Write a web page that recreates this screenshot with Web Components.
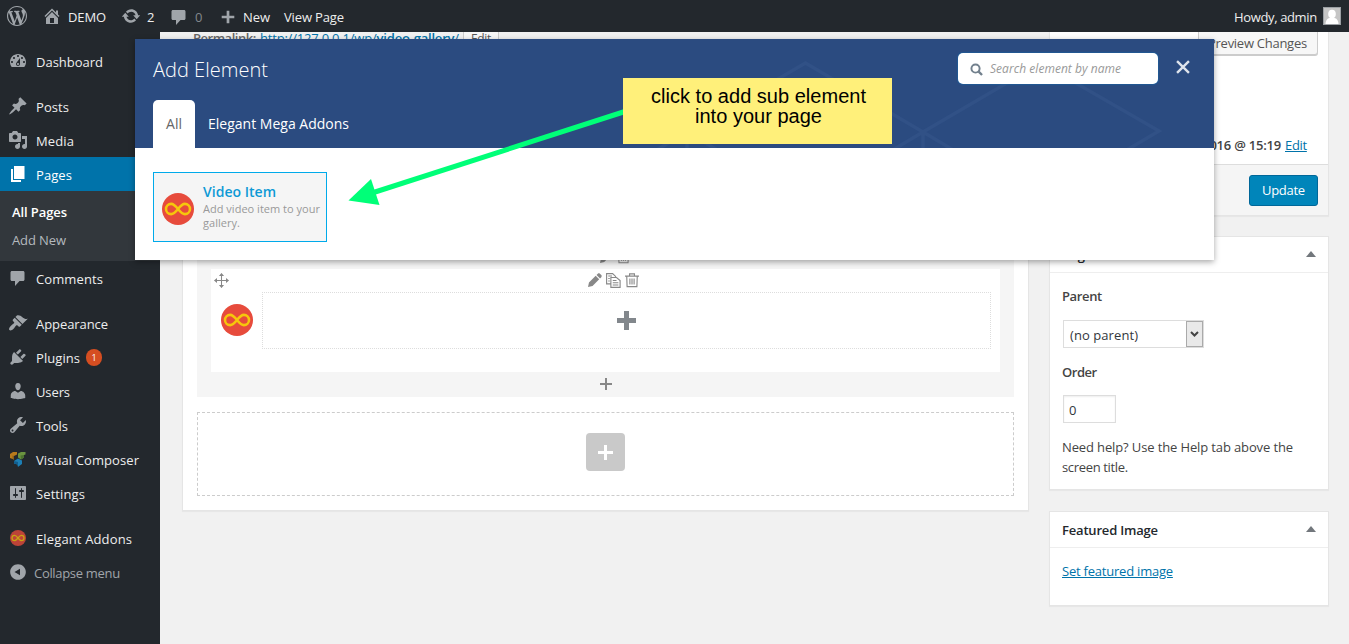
<!DOCTYPE html>
<html lang="en">
<head>
<meta charset="utf-8">
<title>Edit Page</title>
<style>
html,body{margin:0;height:100%;overflow:hidden;background:#f1f1f1}
body{font:13px/20px "Open Sans","Noto Sans",sans-serif;color:#444}
</style>
</head>
<body>
<wp-screen></wp-screen>
<script>
const define=(name,html,setup)=>customElements.define(name,class extends HTMLElement{
  connectedCallback(){
    if(this.shadowRoot)return;
    const root=this.attachShadow({mode:'open'});
    root.innerHTML=typeof html==='function'?html(this):html;
    if(setup)setup(this,root);
  }
});

/* Icon set, 20x20 grid */
const P=(d,extra='')=>`<path fill-rule="evenodd" d="${d}" ${extra}/>`;
const ICONS={
wordpress:P('M20 10C20 4.49 15.51 0 10 0C4.48 0 0 4.49 0 10C0 15.52 4.48 20 10 20C15.51 20 20 15.52 20 10ZM7.78 15.37L4.37 6.22C4.92 6.2 5.54 6.14 5.54 6.14C6.04 6.08 5.98 5.01 5.48 5.03C5.48 5.03 4.03 5.14 3.11 5.14C2.93 5.14 2.74 5.14 2.53 5.13C4.12 2.69 6.87 1.11 10 1.11C12.33 1.11 14.45 1.98 16.05 3.45C15.37 3.34 14.4 3.84 14.4 5.03C14.4 5.77 14.85 6.39 15.3 7.13C15.65 7.74 15.85 8.49 15.85 9.59C15.85 11.08 14.45 14.59 14.45 14.59L11.42 6.22C11.96 6.2 12.24 6.05 12.24 6.05C12.74 6 12.68 4.8 12.18 4.83C12.18 4.83 10.74 4.95 9.8 4.95C8.93 4.95 7.47 4.83 7.47 4.83C6.97 4.8 6.91 6.03 7.41 6.05L8.33 6.13L9.59 9.54ZM17.41 10C17.65 9.36 18.15 8.13 17.84 5.75C18.54 7.04 18.89 8.46 18.89 10C18.89 13.29 17.16 16.24 14.49 17.78C15.46 15.19 16.43 12.58 17.41 10ZM6.1 18.09C3.12 16.65 1.11 13.53 1.11 10C1.11 8.72 1.34 7.56 1.83 6.47C3.25 10.36 4.67 14.26 6.1 18.09ZM10.13 11.46L12.71 18.44C11.85 18.73 10.95 18.89 10 18.89C9.21 18.89 8.43 18.78 7.71 18.56C8.52 16.18 9.33 13.82 10.13 11.46Z'),
home:P('M16 8.5l1.53 1.53-1.06 1.06L10 4.6l-6.47 6.49-1.06-1.06L10 2.5l4 4v-2h2v4zm-6-2.46l6 5.99V18H4v-5.97zM12 17v-5H8v5h4z'),
update:P('M10.2 3.28c3.53 0 6.43 2.61 6.92 6h2.08l-3.5 4-3.5-4h2.32c-.45-1.97-2.21-3.45-4.32-3.45-1.45 0-2.73.71-3.54 1.78L4.95 5.66C6.23 4.2 8.11 3.28 10.2 3.28zm-.4 13.44c-3.52 0-6.43-2.61-6.92-6H.8l3.5-4c1.17 1.33 2.33 2.67 3.5 4H5.48c.45 1.97 2.21 3.45 4.32 3.45 1.45 0 2.73-.71 3.54-1.78l1.71 1.95c-1.28 1.46-3.15 2.38-5.25 2.38z'),
comments:P('M4 3h11c.9 0 1.5.6 1.5 1.5v7c0 .9-.6 1.5-1.5 1.5h-3.5l-4.500 5v-5H4c-.9 0-1.500-.6-1.500-1.500v-7C2.500 3.600 3.100 3 4 3z'),
plus:P('M17 8.500v3h-5.500v5.500h-3v-5.500H3v-3h5.500V3h3v5.500z'),
dashboard:P('M3.76 16h12.48c1.1-1.37 1.76-3.11 1.76-5 0-4.42-3.58-8-8-8s-8 3.58-8 8c0 1.89.66 3.63 1.76 5zM10 4c.55 0 1 .45 1 1s-.45 1-1 1-1-.45-1-1 .45-1 1-1zM6 6c.55 0 1 .45 1 1s-.45 1-1 1-1-.45-1-1 .45-1 1-1zm8 0c.55 0 1 .45 1 1s-.45 1-1 1-1-.45-1-1 .45-1 1-1zm-5.37 5.55L12 7v6c0 1.1-.9 2-2 2s-2-.9-2-2c0-.57.24-1.08.63-1.45zM4 10c.55 0 1 .45 1 1s-.45 1-1 1-1-.45-1-1 .45-1 1-1zm12 0c.55 0 1 .45 1 1s-.45 1-1 1-1-.45-1-1 .45-1 1-1zm-5 3c0-.55-.45-1-1-1s-1 .45-1 1 .45 1 1 1 1-.45 1-1z'),
posts:P('M10.44 3.02l1.82-1.82 6.36 6.35-1.83 1.82c-1.05-.68-2.48-.57-3.41.36l-.75.75c-.92.93-1.04 2.35-.35 3.41l-1.83 1.82-2.41-2.41-2.8 2.79c-.42.42-3.38 2.71-3.8 2.29s1.86-3.39 2.28-3.81l2.79-2.79L4.1 9.36l1.83-1.82c1.05.69 2.48.57 3.4-.36l.75-.75c.93-.92 1.05-2.35.36-3.41z'),
media:P('M13 11V4c0-.55-.45-1-1-1h-1.67L9 1H5L3.67 3H2c-.55 0-1 .45-1 1v7c0 .55.45 1 1 1h10c.55 0 1-.45 1-1zM7 4.5c1.38 0 2.5 1.12 2.5 2.5S8.38 9.5 7 9.5 4.5 8.38 4.5 7 5.62 4.5 7 4.5zM14 6h5v10.5c0 1.38-1.12 2.5-2.5 2.5S14 17.88 14 16.5s1.12-2.5 2.5-2.5c.17 0 .34.02.5.05V9h-3V6zm-4 8.05V13h2v3.5c0 1.38-1.12 2.5-2.5 2.5S7 17.88 7 16.5 8.12 14 9.5 14c.17 0 .34.02.5.05z'),
pages:P('M6 15V2h10.500v13H6zm-1 1h8v2H3V5h2v11z'),
appearance:P('M14.48 11.06L7.41 3.99l1.5-1.5c.5-.56 2.3-.47 3.51.32 1.21.8 1.43 1.28 2.91 2.1 1.18.64 2.45 1.26 4.45.85zm-.71.71L6.7 4.7 4.93 6.47c-.39.39-.39 1.02 0 1.41l1.06 1.06c.39.39.39 1.03 0 1.42-.6.6-1.43 1.11-2.21 1.69-.35.26-.7.53-1.01.84C1.43 14.23.4 16.08 1.4 17.07c.99 1 2.84-.03 4.18-1.36.31-.31.58-.66.85-1.02.57-.78 1.08-1.61 1.69-2.21.39-.39 1.02-.39 1.41 0l1.06 1.06c.39.39 1.02.39 1.41 0z'),
plugins:P('M13.11 4.36L9.87 7.6 8 5.73l3.24-3.24c.35-.34 1.05-.2 1.56.32.52.51.66 1.21.31 1.55zm-8 1.77l.91-1.12 9.01 9.01-1.19.84c-.71.71-2.63 1.16-3.82 1.16H6.14L4.9 17.26c-.59.59-1.54.59-2.12 0-.59-.58-.59-1.53 0-2.12l1.24-1.24v-3.88c0-1.13.4-3.19 1.09-3.89zm7.26 3.97l3.24-3.24c.34-.35 1.04-.21 1.55.31.52.51.66 1.21.31 1.55l-3.24 3.25z'),
users:P('M10 9.25c-2.27 0-2.73-3.44-2.73-3.44C7 4.02 7.82 2 9.97 2c2.16 0 2.98 2.02 2.71 3.81 0 0-.41 3.44-2.68 3.44zm0 2.57L12.72 10c2.39 0 4.52 2.33 4.52 4.53v2.49s-3.65 1.13-7.24 1.13c-3.65 0-7.24-1.13-7.24-1.13v-2.49c0-2.25 1.94-4.48 4.47-4.48z'),
tools:P('M16.68 9.77c-1.34 1.34-3.3 1.67-4.95.99l-5.41 6.52c-.99.99-2.59.99-3.58 0s-.99-2.59 0-3.57l6.52-5.42c-.68-1.65-.35-3.61.99-4.95 1.28-1.28 3.12-1.62 4.72-1.06l-2.89 2.89 2.82 2.82 2.86-2.87c.53 1.58.18 3.39-1.08 4.65zM3.81 16.21c.4.39 1.04.39 1.43 0 .4-.4.4-1.04 0-1.43-.39-.4-1.03-.4-1.43 0-.39.39-.39 1.03 0 1.43z'),
settings:P('M18 16V4c0-.55-.45-1-1-1H3c-.55 0-1 .45-1 1v12c0 .55.45 1 1 1h14c.55 0 1-.45 1-1zM8 11h1c.55 0 1 .45 1 1s-.45 1-1 1H8v1.5c0 .28-.22.5-.5.5s-.5-.22-.5-.5V13H6c-.55 0-1-.45-1-1s.45-1 1-1h1V5.5c0-.28.22-.5.5-.5s.5.22.5.5V11zm5-2h-1c-.55 0-1-.45-1-1s.45-1 1-1h1V5.5c0-.28.22-.5.5-.5s.5.22.5.5V7h1c.55 0 1 .45 1 1s-.45 1-1 1h-1v5.5c0 .28-.22.5-.5.5s-.5-.22-.5-.5V9z'),
collapse:P('M10 2.16c4.33 0 7.84 3.51 7.84 7.84s-3.51 7.84-7.84 7.84S2.16 14.33 2.16 10 5.67 2.16 10 2.16zm2 11.2V6.64L6.500 10z'),
composer:'<path fill="#b87a1c" d="M2 5l3-2h4v2.500L6 7v3.500L2 9z"/><path fill="#8a5f16" d="M4.500 6.500L6 7v3.500l-1.500-.5z"/><path fill="#6b9440" d="M10 4.500L13 3h4.500v2.500L16 6v2.500l-3 2-3-2z"/><path fill="#4c7330" d="M12.500 6.500L16 6v2.500l-3 2z"/><path fill="#1c7fb5" d="M6 12l4-2.500 4 2V15l-3.500 2.500L10 18l-.5-2.500L6 14.500z"/><path fill="#125d8c" d="M6 12l4 1v5l-.5-2.500-3.500-1z"/>',
infinity:'<circle cx="10" cy="10" r="10" fill="#e74b3c"/><path d="M10 10C8.200 7.700 7.200 6.800 5.700 6.800a3.200 3.200 0 0 0 0 6.400C7.200 13.200 8.200 12.300 10 10S12.800 6.800 14.300 6.800a3.200 3.200 0 0 1 0 6.400C12.800 13.200 11.800 12.300 10 10Z" fill="none" stroke="#f6c60c" stroke-width="1.600"/>',
search:'<circle cx="8.500" cy="8.500" r="6.300" fill="none" stroke="currentColor" stroke-width="3"/><path d="M13 13l5.500 5.500" stroke="currentColor" stroke-width="3.600"/>',
close:'<path d="M1.500 1.500l17 17M18.500 1.500l-17 17" stroke="currentColor" stroke-width="3.400"/>',
move:'<path d="M10 1v18M1 10h18" fill="none" stroke="currentColor" stroke-width="1.400"/><path d="M10 0l3.400 4H6.600zM10 20l3.400-4H6.600zM0 10l4-3.400v6.800zM20 10l-4-3.400v6.800z"/>',
pencil:'<path d="M0 20l1.400-6.500L11 4l5 5-9.500 9.600zM12.200 2.800L14 1c.8-.8 2.200-.8 3 0l2 2c.8.800.8 2.200 0 3l-1.800 1.800z"/>',
copy:'<g fill="none" stroke="currentColor" stroke-width="1.500"><path d="M6 14.500H.8V.8h8l4 3.700v2M6.500 6h7.500l4.800 4v9.200H6.500zM3 4h5M3 7.300h2M3 10.700h2M9 10h5M9 13h7.500M9 16h7.500"/></g>',
trash:'<g fill="none" stroke="currentColor" stroke-width="1.600"><path d="M0 4.500h20M6.500 4V1.200h7V4M2.500 5l.5 14.500h14l.5-14.500M7 8v8.500M10 8v8.500M13 8v8.500"/></g>'
};
define('ui-icon',el=>`<style>:host{display:block;flex:none;line-height:0;width:${el.getAttribute('size')||20}px;height:${el.getAttribute('size')||20}px}svg{display:block;width:100%;height:100%;fill:currentColor;overflow:visible}</style><svg viewBox="0 0 20 20">${ICONS[el.getAttribute('name')]}</svg>`);

/* Single-line label tracked to a given measure */
define('ui-label',`<style>:host{display:block;flex:none;white-space:nowrap}span{display:inline-block}</style><span><slot></slot></span>`,(el,root)=>{
  const w=+el.getAttribute('w'),span=root.querySelector('span');
  if(!w)return;
  el.style.width=w+'px';
  const n=el.textContent.length;
  if(n>1)span.style.letterSpacing=((w-span.getBoundingClientRect().width)/(n-.5))+'px';
});

define('admin-bar',`<style>
:host{display:flex;align-items:center;height:32px;background:#23282d;color:#eee;padding:0 8px 0 7px;box-sizing:border-box;line-height:20px}
ui-icon{color:#a0a5aa}.dim{color:#82878c}
ui-label{margin-top:2px;height:21px}
.who{margin-left:auto;margin-right:6px}
.avatar{width:18px;height:18px;background:#c5c5c5;box-sizing:border-box;border:1px solid #9b9fa3;overflow:hidden}
.avatar svg{display:block}
</style>
<ui-icon name="wordpress"></ui-icon>
<ui-icon name="home" style="margin-left:15px"></ui-icon><ui-label w="38" style="margin-left:6px">DEMO</ui-label>
<ui-icon name="update" style="margin-left:15px"></ui-icon><ui-label w="7" style="margin-left:6px">2</ui-label>
<ui-icon name="comments" style="margin:2px 0 0 15px"></ui-icon><ui-label class="dim" w="7" style="margin-left:6px">0</ui-label>
<ui-icon name="plus" size="18" style="margin:1px 0 0 17px"></ui-icon><ui-label w="27" style="margin-left:6px">New</ui-label>
<ui-label w="60" style="margin-left:14px">View Page</ui-label>
<ui-label class="who" w="83">Howdy, admin</ui-label>
<span class="avatar"><svg width="16" height="16" viewBox="0 0 16 16" fill="#fff"><ellipse cx="8" cy="6" rx="3.800" ry="4.300"/><path d="M1.500 16c.3-4 2-5.500 4-6h5c2 .5 3.700 2 4 6z"/></svg></span>`);

define('menu-item',el=>`<style>
:host{display:flex;height:34px;align-items:center;padding-left:8px;color:#eee}
:host([current]){background:#0073aa;color:#fff}
:host([current]) ui-icon{color:#fff}
:host([gap]){margin-top:11px}
:host([muted]){color:#a0a5aa}
ui-icon{color:#a0a5aa;margin-right:8px;margin-top:-1px}
:host([muted]) ui-icon{margin-right:6px}
ui-icon[name=infinity]{opacity:.78;margin:0 10px 0 2px}
ui-label{margin-top:2px}
.badge{margin-left:6px;width:16px;height:17px;border-radius:9px;background:#d54e21;color:#fff;font-size:9px;line-height:17px;text-align:center}
</style><ui-icon name="${el.getAttribute('icon')}" ${el.getAttribute('icon')==='infinity'?'size="16"':''}></ui-icon><ui-label w="${el.getAttribute('w')}">${el.getAttribute('label')}</ui-label>${el.hasAttribute('badge')?`<span class="badge">${el.getAttribute('badge')}</span>`:''}`);

define('admin-menu',`<style>
:host{display:block;width:160px;background:#23282d;padding-top:12px;box-sizing:border-box;flex:none}
.sub{background:#32373c;height:70px;box-sizing:border-box;padding:7px 0 0 12px;color:#b4b9be}
.sub ui-label{height:28px;line-height:29px}
.sub .on{color:#fff;font-weight:600}
</style>
<menu-item icon="dashboard" w="67" label="Dashboard"></menu-item>
<menu-item gap icon="posts" w="33" label="Posts"></menu-item>
<menu-item icon="media" w="38" label="Media"></menu-item>
<menu-item current icon="pages" w="36" label="Pages"></menu-item>
<div class="sub"><ui-label class="on" w="55">All Pages</ui-label><ui-label w="54">Add New</ui-label></div>
<menu-item icon="comments" w="67" label="Comments"></menu-item>
<menu-item gap icon="appearance" w="72" label="Appearance"></menu-item>
<menu-item icon="plugins" w="44" label="Plugins" badge="1"></menu-item>
<menu-item icon="users" w="34" label="Users"></menu-item>
<menu-item icon="tools" w="32" label="Tools"></menu-item>
<menu-item icon="composer" w="103" label="Visual Composer"></menu-item>
<menu-item icon="settings" w="49" label="Settings"></menu-item>
<menu-item gap icon="infinity" w="96" label="Elegant Addons"></menu-item>
<menu-item muted icon="collapse" w="86" label="Collapse menu"></menu-item>`);

define('page-editor',`<style>
:host{display:flex;flex-direction:column;width:847px;flex:none}
.perma{display:flex;height:24px;padding-left:11px;line-height:20px;margin-top:-4px;color:#666}
.perma b{font-weight:600}.perma a{color:#0073aa;text-decoration:underline}
.perma ui-label+ui-label{margin-left:4px}
.btn{margin-left:4px;width:36px;height:24px;box-sizing:border-box;border:1px solid #ccc;background:#f7f7f7;font-size:12px;padding-left:7px;margin-top:-1px;line-height:21px;color:#555}
.box{margin-top:12px;height:447px;box-sizing:border-box;border:1px solid #e5e5e5;background:#fff;padding:14px;display:flex;flex-direction:column;box-shadow:0 1px 1px rgba(0,0,0,.04)}
.row{height:318px;background:#f5f5f5;box-sizing:border-box;padding:164px 14px 0;display:flex;flex-direction:column}
.tools{display:flex;color:#888;justify-content:center}
.tools.top{height:26px;align-items:flex-end;gap:4px;padding:0 0 6px 18px;box-sizing:border-box}
.cell{background:#fff;height:103px;padding:3px 9px 0 3px;box-sizing:border-box;flex:none}
.head{display:grid;grid-template-columns:1fr auto 1fr;height:16px;margin-bottom:4px;align-items:center;color:#888}
.head .mid{display:flex;gap:4px;padding-left:22px}
.body{display:flex;align-items:center;gap:9px;padding-left:7px}
.drop{flex:1;height:57px;box-sizing:border-box;border:1px dotted #ddd;display:flex;align-items:center;justify-content:center;color:#82878c}
.add{height:24px;display:flex;align-items:center;justify-content:center;color:#888}
.empty{margin-top:15px;height:84px;box-sizing:border-box;border:1px dashed #ccc;display:flex;align-items:center;justify-content:center;padding-bottom:4px}
.empty span{width:39px;height:38px;border-radius:4px;background:#c9c9c9;display:grid;place-items:center}
</style>
<div class="perma"><ui-label w="63"><b>Permalink:</b></ui-label><ui-label w="199"><a>http://127.0.0.1/wp/<span style="font-weight:600">video-gallery</span>/</a></ui-label><span class="btn"><ui-label w="20">Edit</ui-label></span></div>
<div class="box">
 <div class="row">
  <div class="tools top"><ui-icon name="pencil" size="13"></ui-icon><ui-icon name="trash" size="13"></ui-icon></div>
  <div class="cell">
   <div class="head"><ui-icon name="move" size="15"></ui-icon><div class="mid"><ui-icon name="pencil" size="14"></ui-icon><ui-icon name="copy" size="15"></ui-icon><ui-icon name="trash" size="14"></ui-icon></div><span></span></div>
   <div class="body"><ui-icon name="infinity" size="32" style="margin-top:-2px"></ui-icon><div class="drop"><svg width="19" height="19"><path d="M9.500 0v19M0 9.500h19" stroke="currentColor" stroke-width="5"/></svg></div></div>
  </div>
  <div class="add"><svg width="12" height="12"><path d="M6 0v12M0 6h12" stroke="currentColor" stroke-width="2"/></svg></div>
 </div>
 <div class="empty"><span><svg width="15" height="15"><path d="M7.500 0v15M0 7.500h15" stroke="#fff" stroke-width="3"/></svg></span></div>
</div>`);

define('meta-box',el=>`<style>
:host{display:block;background:#fff;border:1px solid #e5e5e5;box-sizing:border-box;box-shadow:0 1px 1px rgba(0,0,0,.04);padding:0;color:#444}
header{height:35px;border-bottom:1px solid #eee;display:flex;justify-content:space-between;align-items:center;padding:0 12px;color:#23282d;font-weight:600}
header ui-label{margin-top:1px}
i{border:5px solid transparent;border-top:0;border-bottom:6px solid #72777c;margin:-2px 0 0 0}
.in{padding:0 12px}
</style><header><ui-label w="${el.getAttribute('w')}">${el.getAttribute('heading')}</ui-label><i></i></header><div class="in"><slot></slot></div>`);

define('publish-box',`<style>
:host{display:flex;flex-direction:column;height:190px;margin-top:-6px;background:#fff;border:1px solid #e5e5e5;box-sizing:border-box;box-shadow:0 1px 1px rgba(0,0,0,.04)}
.top{display:flex;justify-content:flex-end;padding-right:10px}
.pre{width:120px;height:28px;box-sizing:border-box;border:1px solid #ccc;border-radius:3px;background:#f7f7f7;box-shadow:0 1px 0 #ccc;color:#555;padding:5px 0 0 9px;line-height:20px}
.date{display:flex;justify-content:flex-end;gap:4px;padding-right:21px;margin-top:80px;height:29px;line-height:20px}
.date b{font-weight:600}a{color:#0073aa;text-decoration:underline}
.foot{border-top:1px solid #ddd;background:#f5f5f5;flex:1;display:flex;justify-content:flex-end;align-items:flex-start;padding:10px 10px 0 0}
.up{width:69px;height:31px;box-sizing:border-box;border:1px solid #006799;border-radius:3px;background:#0085ba;color:#fff;padding:4px 0 0 12px;line-height:20px}
</style>
<div class="top"><span class="pre"><ui-label w="99">Preview Changes</ui-label></span></div>
<div class="date"><b><ui-label w="120">Nov 7, 2016 @ 15:19</ui-label></b><ui-label w="22"><a>Edit</a></ui-label></div>
<div class="foot"><span class="up"><ui-label w="43">Update</ui-label></span></div>`);

define('side-column',`<style>
:host{display:flex;flex-direction:column;width:280px;margin-left:20px;flex:none}
.sel{display:flex;width:141px;height:28px;box-sizing:border-box;border:1px solid #ddd;margin:14px 0 0 1px;padding-left:6px;justify-content:space-between;background:#fff;line-height:29px;color:#32373c}
.arr{width:17px;height:26px;box-sizing:border-box;border:1px solid #aaa;background:#e9e9e9;display:grid;place-items:center}
.num{width:53px;height:28px;box-sizing:border-box;border:1px solid #ddd;margin:13px 0 0 1px;padding-left:5px;line-height:29px;color:#32373c;box-shadow:inset 0 1px 2px rgba(0,0,0,.07)}
.str{font-weight:600}a{color:#0073aa;text-decoration:underline}
</style>
<publish-box></publish-box>
<meta-box heading="Page Attributes" w="98" style="height:254px;margin-top:20px">
 <ui-label class="str" w="40" style="margin-top:13px">Parent</ui-label>
 <div class="sel"><ui-label w="68">(no parent)</ui-label><span class="arr"><svg width="9" height="6"><path d="M1 1l3.500 3.500L8 1" fill="none" stroke="#444" stroke-width="2"/></svg></span></div>
 <ui-label class="str" w="35" style="margin-top:14px">Order</ui-label>
 <div class="num">0</div>
 <ui-label w="231" style="margin-top:14px">Need help? Use the Help tab above the</ui-label>
 <ui-label w="66">screen title.</ui-label>
</meta-box>
<meta-box heading="Featured Image" w="96" style="height:95px;margin-top:21px">
 <ui-label w="111" style="margin-top:13px"><a>Set featured image</a></ui-label>
</meta-box>`);

define('element-card',`<style>
:host{display:flex;width:174px;height:70px;box-sizing:border-box;border:1px solid #00aaea;background:#f5f5f5;padding:9px 0 0 8px}
ui-icon{margin:11px 9px 0 1px}
.t{color:#0e9ad6;font-size:14px;font-weight:600;line-height:20px}
.d{color:#999;font-size:11px;line-height:14px}
</style><ui-icon name="infinity" size="32" style="margin-left:0"></ui-icon><div><ui-label class="t" w="73">Video Item</ui-label><ui-label class="d" w="117">Add video item to your</ui-label><ui-label class="d" w="37">gallery.</ui-label></div>`);

define('add-element-panel',`<style>
:host{display:block;background:#fff;box-shadow:0 2px 6px rgba(0,0,0,.35)}
header{height:109px;background:#2b4b80;position:relative;display:flex;flex-direction:column;justify-content:space-between;box-sizing:border-box;padding:14px 24px 0 18px;color:#fff}
.deco{position:absolute;left:0;top:0}
.bar{display:flex;align-items:center;height:31px;position:relative}
.title{font-size:20px;font-weight:300;line-height:30px;margin-right:auto;margin-top:2px}
.search{width:200px;height:31px;border-radius:5px;background:#fff;box-shadow:0 0 2px #0d7ac0;display:flex;align-items:center;padding-left:12px;box-sizing:border-box;color:#72808d;margin-right:18px}
.search ui-label{color:#999;font-style:italic;font-size:12px;margin-left:7px;margin-top:1px}
.bar>ui-icon{color:#dfe4ec;margin-top:-4px}
.tabs{display:flex;position:relative;font-size:14px;line-height:48px}
.tab{width:42px;height:48px;border-radius:5px 5px 0 0;background:#fff;color:#666;box-sizing:border-box;padding-left:13px;margin-right:13px}
.body{padding:24px 18px}
</style>
<header>
<svg class="deco" width="1079" height="109" viewBox="135 39 1079 109" fill="none" stroke="#315186" stroke-width="3.500"><path d="M655 151L687 132L805.500 63L923 132L955 151M687 132V150M687 132L719 151M923 132V150M891 151L923 132L1041 63L1159 131L1125 151"/></svg>
<div class="bar"><ui-label class="title" w="115">Add Element</ui-label><div class="search"><ui-icon name="search" size="13" style="margin-top:2px"></ui-icon><ui-label w="131">Search element by name</ui-label></div><ui-icon name="close" size="14"></ui-icon></div>
<div class="tabs"><div class="tab"><ui-label w="16">All</ui-label></div><ui-label w="141">Elegant Mega Addons</ui-label></div>
</header>
<div class="body"><element-card></element-card></div>`);

define('callout-note',`<style>
:host{display:flex;flex-direction:column;align-items:center;width:269px;height:66px;box-sizing:border-box;background:#fff07a;color:#000;padding:8px 0 0 2px;font:20px/20px "Liberation Sans",Arial,sans-serif}
</style><ui-label w="215">click to add sub element</ui-label><ui-label w="127">into your page</ui-label>`);

define('wp-screen',`<style>
:host{display:flex;flex-direction:column;height:644px;width:1349px;position:relative;overflow:hidden;background:#f1f1f1}
.main{display:flex;flex:1;min-height:0;overflow:hidden}
page-editor{margin-left:22px}
add-element-panel{position:absolute;left:135px;top:39px;width:1079px;height:221px}
callout-note{position:absolute;left:623px;top:78px}
.arrow{position:absolute;left:340px;top:100px}
</style>
<admin-bar></admin-bar>
<div class="main"><admin-menu></admin-menu><page-editor></page-editor><side-column></side-column></div>
<add-element-panel></add-element-panel>
<svg class="arrow" width="290" height="115" viewBox="340 100 290 115"><path d="M372 193L628 110.500" stroke="#00ff78" stroke-width="5"/><path d="M348.500 200.500L371 179L379.500 205Z" fill="#00ff78"/></svg>
<callout-note></callout-note>`);
</script>
</body>
</html>
